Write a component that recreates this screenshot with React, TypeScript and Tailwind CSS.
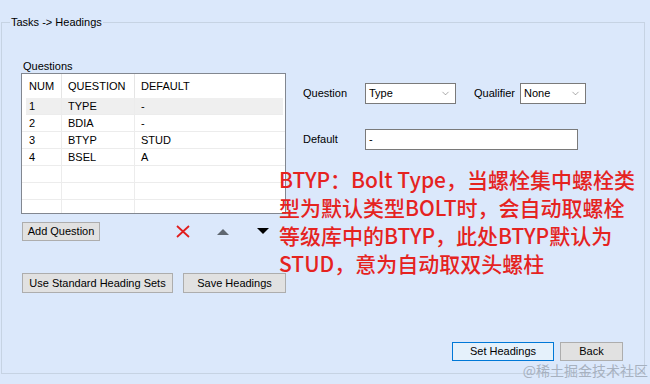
import { ChevronDown } from 'lucide-react';

const ui = { fontFamily: '"Liberation Sans", Arial, sans-serif' };
const cjk = { fontFamily: '"Noto Sans CJK SC", "Noto Sans", sans-serif' };

const rows = [
  { num: '1', q: 'TYPE', d: '-' },
  { num: '2', q: 'BDIA', d: '-' },
  { num: '3', q: 'BTYP', d: 'STUD' },
  { num: '4', q: 'BSEL', d: 'A' },
  { num: '', q: '', d: '' },
  { num: '', q: '', d: '' },
  { num: '', q: '', d: '' },
];

function Button({ label, width, primary }: { label: string; width: string; primary?: boolean }) {
  return (
    <button
      className={`${width} h-[19px] whitespace-nowrap text-[11px] leading-none text-black border ${
        primary ? 'bg-[#e5f1fb] border-[#0078d7]' : 'bg-[#e1e1e1] border-[#adadad]'
      }`}
    >
      {label}
    </button>
  );
}

function Select({ value, width }: { value: string; width: string }) {
  return (
    <div className={`${width} h-[21px] flex items-center justify-between bg-white border border-[#7a7a7a] pl-[3px] pr-[4px] text-[11px]`}>
      <span>{value}</span>
      <ChevronDown size={11} strokeWidth={1.1} className="text-[#555]" />
    </div>
  );
}

export default function App() {
  return (
    <div className="relative w-[650px] h-[384px] bg-[#dbe8fb] overflow-hidden text-black" style={ui}>
      <fieldset className="ml-[1px] mt-[14px] w-[644px] h-[360px] border border-[#c6d3e3]">
        <legend className="ml-[8px] px-[1px] text-[11px] leading-[16px]">Tasks -&gt; Headings</legend>

        <div className="flex">
          {/* left: question list */}
          <div className="ml-[19px] w-[265px] flex flex-col">
            <div className="mt-[29px] pl-[2px] text-[11px] leading-[14px]">Questions</div>
            <div className="h-[141px] border border-[#828790] bg-white overflow-hidden text-[11px]">
              <div className="flex h-[24px] items-center">
                <div className="w-[40px] h-full flex items-center pl-[7px] border-r border-[#e5e5e5]">NUM</div>
                <div className="w-[73px] h-full flex items-center pl-[6px] border-r border-[#e5e5e5]">QUESTION</div>
                <div className="flex-1 pl-[6px]">DEFAULT</div>
              </div>
              {rows.map((r, i) => (
                <div
                  key={i}
                  className={`flex h-[17px] items-center border-b border-[#ececec] ${i === 0 ? 'bg-[#efefef] ml-[4px] mr-[2px]' : ''}`}
                >
                  <div className={`${i === 0 ? 'w-[36px] pl-[3px]' : 'w-[40px] pl-[7px]'} h-full flex items-center border-r border-[#ececec]`}>
                    {r.num}
                  </div>
                  <div className="w-[73px] h-full flex items-center pl-[6px] border-r border-[#ececec]">{r.q}</div>
                  <div className="flex-1 pl-[6px]">{r.d}</div>
                </div>
              ))}
            </div>

            <div className="mt-[8px] pl-[1px] flex items-center h-[19px]">
              <Button label="Add Question" width="w-[78px]" />
              <svg width="14" height="13" viewBox="0 0 14 13" className="ml-[76px]">
                <path d="M1 1 L13 12 M13 1 L1 12" stroke="#e11d1d" strokeWidth="1.8" />
              </svg>
              <svg width="12" height="6" viewBox="0 0 12 6" className="ml-[27px]">
                <path d="M6 0 L12 6 L0 6 Z" fill="#5f6770" />
              </svg>
              <svg width="12" height="6" viewBox="0 0 12 6" className="ml-[28px] mb-[2px]">
                <path d="M0 0 L12 0 L6 6 Z" fill="#000" />
              </svg>
            </div>

            <div className="mt-[32px] pl-[1px] flex gap-[10px]">
              <Button label="Use Standard Heading Sets" width="w-[151px] h-[20px]" />
              <Button label="Save Headings" width="w-[103px] h-[20px]" />
            </div>
          </div>

          {/* right: question editor */}
          <div className="ml-[17px] mt-[53px] text-[11px]">
            <div className="flex items-center">
              <div className="w-[62px]">Question</div>
              <Select value="Type" width="w-[91px]" />
              <div className="ml-[18px] w-[46px]">Qualifier</div>
              <Select value="None" width="w-[66px]" />
            </div>
            <div className="mt-[25px] flex items-center">
              <div className="w-[62px]">Default</div>
              <div className="w-[213px] h-[21px] bg-white border border-[#7a7a7a] pl-[3px] flex items-center">-</div>
            </div>
          </div>
        </div>

        <div className="mt-[49px] pr-[21px] flex justify-end gap-[6px]">
          <Button label="Set Headings" width="w-[102px]" primary />
          <Button label="Back" width="w-[63px]" />
        </div>
      </fieldset>

      {/* annotation */}
      <div className="absolute left-[279px] top-[165px] text-[21px] leading-[28px] font-medium text-[#e5231f] whitespace-nowrap" style={cjk}>
        <div>BTYP：Bolt Type，当螺栓集中螺栓类</div>
        <div>型为默认类型BOLT时，会自动取螺栓</div>
        <div>等级库中的BTYP，此处BTYP默认为</div>
        <div>STUD，意为自动取双头螺柱</div>
      </div>

      <div className="absolute right-[2px] bottom-[5px] text-[14px] leading-[17px] text-[#a7b1bf]" style={cjk}>
        @稀土掘金技术社区
      </div>
    </div>
  );
}
